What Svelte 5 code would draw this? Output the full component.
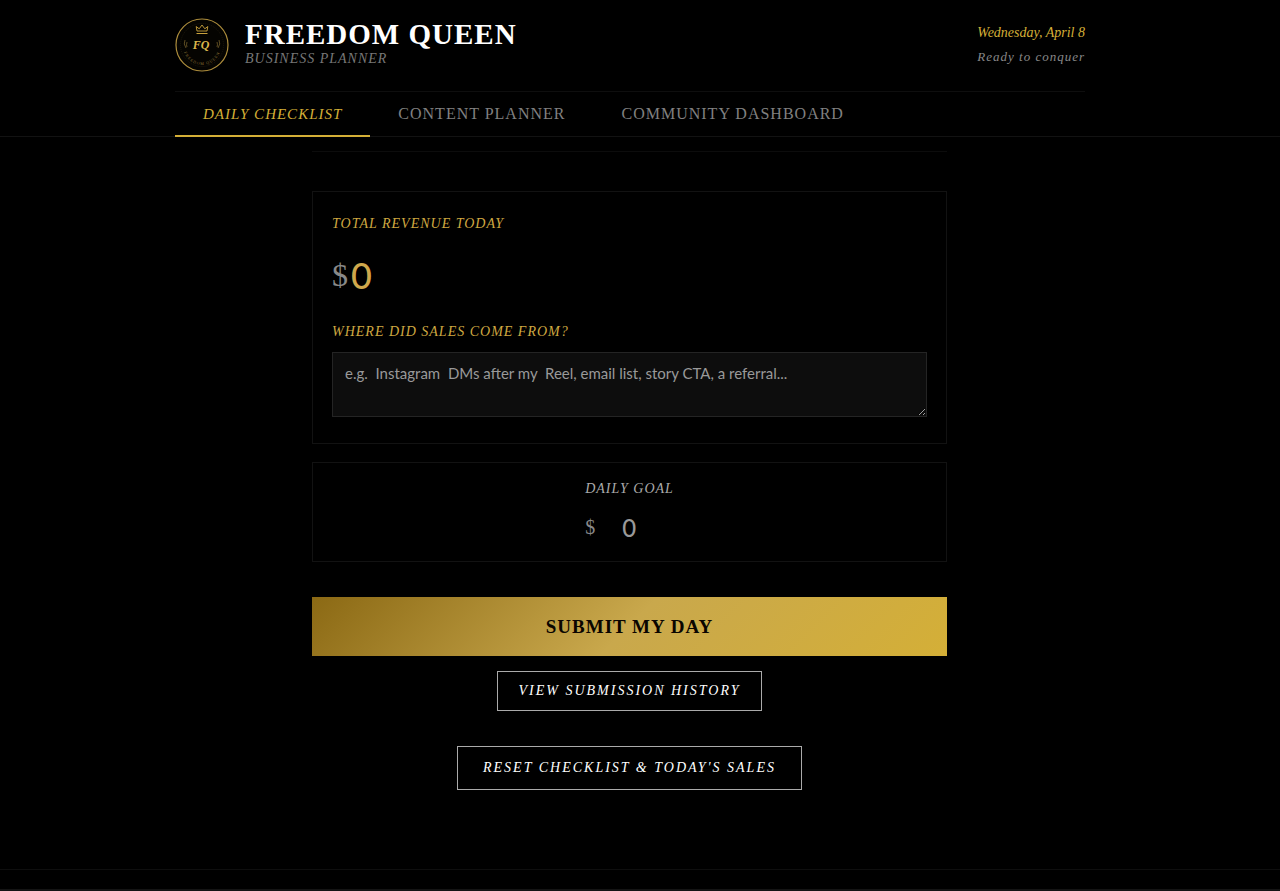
<script>
	const tabs = [
		{ id: 'checklist', label: 'DAILY CHECKLIST' },
		{ id: 'content', label: 'CONTENT PLANNER' },
		{ id: 'community', label: 'COMMUNITY DASHBOARD' }
	]

	let activeTab = $state('checklist')
	let revenue = $state('')
	let source = $state('')
	let goal = $state('')

	function resetDay() {
		revenue = ''
		source = ''
	}
</script>

<div class="page">
	<header class="header">
		<div class="container">
			<div class="header-top">
				<div class="brand">
					<svg class="logo" viewBox="0 0 54 54" aria-hidden="true">
						<defs>
							<path id="ring-text" d="M8 28a19 19 0 0 0 38 0" />
						</defs>
						<circle cx="27" cy="27" r="26" fill="#050401" stroke="#ad8d3c" stroke-width="1.2" />
						<circle cx="27" cy="27" r="21.5" fill="none" stroke="#2a2310" stroke-width="0.6" stroke-dasharray="1 1" />
						<path d="M22 13l-.8-4.500 3 2.300L27 7l2.800 3.800 3-2.300-.8 4.500z" fill="none" stroke="#c9a23c" stroke-width="0.9" />
						<path d="M21.500 15.500h11" stroke="#c9a23c" />
						<path d="M10 22q-2 4 1 8M12 24q-1 3 0 5M44 22q2 4-1 8M42 24q1 3 0 5" fill="none" stroke="#75602b" stroke-width="0.8" />
						<text x="26" y="31" class="monogram">FQ</text>
						<text class="ring"><textPath href="#ring-text" startOffset="50%">FREEDOM QUEEN</textPath></text>
					</svg>
					<div>
						<h1>FREEDOM QUEEN</h1>
						<p class="tagline">BUSINESS PLANNER</p>
					</div>
				</div>
				<div class="today">
					<p class="date">Wednesday, April 8</p>
					<p class="mood">Ready to conquer</p>
				</div>
			</div>

			<nav class="tabs">
				{#each tabs as tab (tab.id)}
					<button
						type="button"
						class="tab"
						class:active={activeTab === tab.id}
						onclick={() => (activeTab = tab.id)}
					>
						{tab.label}
					</button>
				{/each}
			</nav>
		</div>
	</header>

	<main class="main">
		<section class="card revenue-card">
			<label for="revenue" class="field-label">TOTAL REVENUE TODAY</label>
			<div class="revenue-row">
				<span class="currency">$</span>
				<input id="revenue" type="text" inputmode="numeric" placeholder="0" bind:value={revenue} />
			</div>
			<label for="source" class="field-label">WHERE DID SALES COME FROM?</label>
			<textarea
				id="source"
				placeholder="e.g.  Instagram  DMs after my  Reel, email list, story CTA, a referral..."
				bind:value={source}
			></textarea>
		</section>

		<section class="card goal-card">
			<div>
				<label for="goal" class="goal-label">DAILY GOAL</label>
				<div class="goal-row">
					<span class="goal-currency">$</span>
					<input id="goal" type="text" inputmode="numeric" placeholder="0" bind:value={goal} />
				</div>
			</div>
		</section>

		<button type="button" class="submit">SUBMIT MY DAY</button>
		<button type="button" class="outline history">VIEW SUBMISSION HISTORY</button>
		<button type="button" class="outline reset" onclick={resetDay}>
			RESET CHECKLIST &amp; TODAY'S SALES
		</button>
	</main>

	<footer class="footer"></footer>
</div>

<style>
	:global(body) {
		background: #000;
	}

	.page {
		font-family: 'Liberation Serif', serif;
		color: #fff;
		background: #000;
	}

	h1,
	p {
		margin: 0;
	}

	button,
	input,
	textarea {
		box-sizing: border-box;
		margin: 0;
		font-family: inherit;
	}

	button {
		cursor: pointer;
	}

	.header {
		padding-right: 20px;
		border-bottom: 1px solid #121212;
	}

	.container {
		max-width: 910px;
		margin: 0 auto;
	}

	.header-top {
		display: flex;
		justify-content: space-between;
		align-items: flex-start;
		padding: 18px 0 19px;
		border-bottom: 1px solid #0e0e0e;
	}

	.brand {
		display: flex;
		gap: 16px;
	}

	.logo {
		flex: none;
		width: 54px;
		height: 54px;
	}

	.monogram {
		font-size: 12px;
		font-style: italic;
		font-weight: bold;
		text-anchor: middle;
		fill: #dcb64c;
	}

	.ring {
		font-size: 4px;
		text-anchor: middle;
		letter-spacing: 1px;
		fill: #8a7133;
	}

	h1 {
		font-size: 29px;
		line-height: 32px;
		letter-spacing: 1px;
	}

	.tagline {
		font-size: 14px;
		line-height: 18px;
		font-style: italic;
		letter-spacing: 1px;
		color: #777;
	}

	.today {
		padding-top: 3px;
		text-align: right;
		font-size: 14px;
		line-height: 24px;
		font-style: italic;
	}

	.date {
		color: #d4af37;
	}

	.mood {
		font-size: 13px;
		letter-spacing: 1px;
		color: #888;
	}

	.tabs {
		display: flex;
		margin-bottom: -1px;
	}

	.tab {
		padding: 12px 28px 11px;
		border: 0;
		border-bottom: 2px solid transparent;
		background: none;
		color: #808080;
		font-size: 16px;
		line-height: 20px;
		letter-spacing: 1px;
	}

	.tab.active {
		border-bottom-color: #d4af37;
		color: #d4af37;
		font-size: 15px;
		font-style: italic;
	}

	.main {
		display: flex;
		flex-direction: column;
		max-width: 635px;
		margin: 0 auto;
		padding: 14px 21px 79px 0;
	}

	.main::before {
		content: '';
		height: 1px;
		margin-bottom: 39px;
		background: #0c0c0c;
	}

	.card {
		border: 1px solid #121212;
	}

	.revenue-card {
		display: flex;
		flex-direction: column;
		padding: 20px 19px 26px;
	}

	.field-label,
	.goal-label {
		display: block;
		font-size: 14px;
		line-height: 24px;
		font-style: italic;
		letter-spacing: 1px;
		color: #cfa840;
	}

	.revenue-row {
		display: flex;
		align-items: center;
		gap: 3px;
		height: 60px;
		margin: 9px 0 15px;
	}

	.currency {
		font-size: 32px;
		line-height: 40px;
		color: #888;
	}

	input {
		min-width: 0;
		padding: 0;
		border: 0;
		background: none;
		font-family: Lato, sans-serif;
		font-weight: 500;
	}

	#revenue {
		flex: 1;
		height: 60px;
		font-size: 36px;
		color: #cfa84c;
	}

	#revenue::placeholder {
		color: #cfa84c;
	}

	textarea {
		width: 100%;
		height: 65px;
		margin-top: 8px;
		padding: 9px 12px;
		border: 1px solid #242424;
		border-radius: 0;
		background: #0d0d0d;
		color: #ddd;
		color-scheme: dark;
		font-family: Lato, sans-serif;
		font-size: 15px;
		line-height: 22px;
		resize: vertical;
	}

	textarea::placeholder {
		color: #999;
	}

	.goal-card {
		display: flex;
		justify-content: center;
		margin-top: 18px;
		padding: 14px 0 14px;
	}

	.goal-label {
		color: #aaa;
	}

	.goal-row {
		display: flex;
		align-items: center;
		gap: 6px;
		height: 40px;
		margin-top: 6px;
	}

	.goal-currency {
		font-size: 20px;
		color: #888;
	}

	#goal {
		width: 56px;
		height: 40px;
		font-size: 24px;
		text-align: center;
		color: #999;
	}

	#goal::placeholder {
		color: #999;
	}

	.submit {
		height: 59px;
		margin-top: 35px;
		border: 0;
		background: linear-gradient(135deg, #8b6914 0%, #c9a84c 50%, #d4af37 100%);
		color: #0a0500;
		font-size: 19px;
		font-weight: bold;
		letter-spacing: 1px;
	}

	.outline {
		align-self: center;
		border: 1px solid #aaa;
		background: none;
		color: #fff;
		font-size: 14px;
		font-style: italic;
		letter-spacing: 2px;
	}

	.history {
		height: 40px;
		margin-top: 15px;
		padding: 0 20px;
	}

	.reset {
		height: 44px;
		margin-top: 35px;
		padding: 0 25px;
	}

	.footer {
		height: 19px;
		border-top: 1px solid #0e0e0e;
		border-bottom: 2px solid #141414;
	}
</style>
